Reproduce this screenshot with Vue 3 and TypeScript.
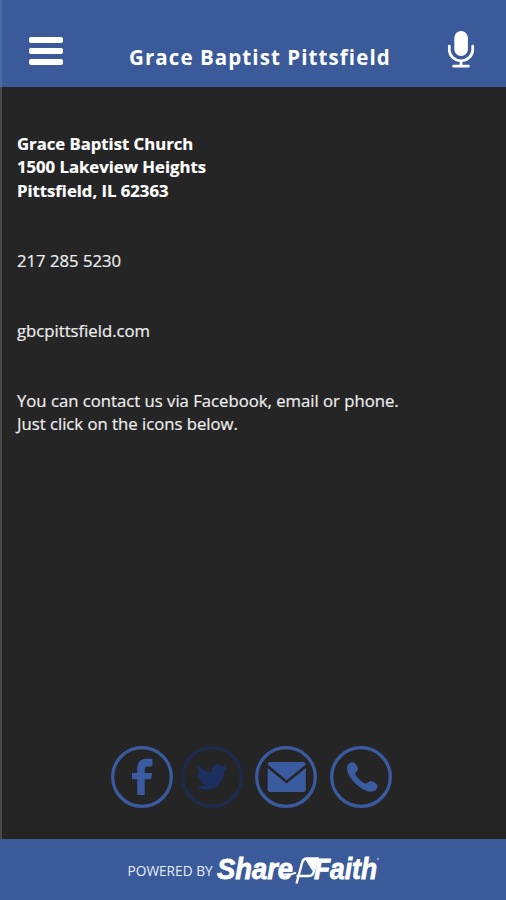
<script setup lang="ts">
const address: string[] = ['Grace Baptist Church', '1500 Lakeview Heights', 'Pittsfield, IL 62363']
</script>

<template>
  <div class="screen">
    <header class="bar">
      <button class="menu" aria-label="Menu"><i></i><i></i><i></i></button>
      <h1>Grace Baptist Pittsfield</h1>
      <svg class="mic" viewBox="0 0 28 40">
        <rect x="7.3" y="1" width="13.6" height="25" rx="6.8" fill="#fff" />
        <path d="M2.3 16v3.8a11.7 11 0 0 0 23.4 0v-3.8M14 31v5M6.6 36.2h14.8" fill="none" stroke="#fff" stroke-width="2.7" stroke-linecap="round" />
      </svg>
    </header>
    <main>
      <p class="address"><span v-for="line in address" :key="line">{{ line }}</span></p>
      <p class="phone">217 285 5230</p>
      <p class="site">gbcpittsfield.com</p>
      <p class="note">You can contact us via Facebook, email or phone.<br />Just click on the icons below.</p>
      <nav>
        <svg class="fb" viewBox="0 0 62 62">
          <circle cx="31" cy="31" r="29.3" />
          <path d="M41.4 13v7.600h-4.100c-3 0-3.600 1.400-3.600 3.400v3h7.500l-1.200 6.200h-6.300V49h-7.400V33.200H21V27h5.300v-4.800c0-6.100 3.900-9.500 9.500-9.500 2.500 0 4.500.1 5.600.3z" />
        </svg>
        <svg class="tw" viewBox="0 0 62 62">
          <circle cx="31" cy="31" r="29.3" />
          <path transform="translate(13 13.300) scale(.0198)" d="M1684 408q-67 98-162 167 1 14 1 42 0 130-38 259.500t-115.500 248.500-184.500 210.500-258 146-323 54.500q-271 0-496-145 35 4 78 4 225 0 401-138-105-2-188-64.500t-114-159.500q33 5 61 5 43 0 85-11-112-23-185.500-111.500t-73.500-205.500v-4q68 38 146 41-66-44-105-115t-39-154q0-88 44-163 121 149 294.500 238.500t371.500 99.500q-8-38-8-74 0-134 94.500-228.500t228.500-94.500q140 0 236 102 109-21 205-78-37 115-142 178 93-10 186-50z" />
        </svg>
        <svg class="mail" viewBox="0 0 62 62">
          <circle cx="31" cy="31" r="29.3" />
          <path d="M15 16h33q2.600 0 2.800 2.500L31.600 34.300 12.700 18.500Q12.900 16 15 16zM12.600 22l19 15.600L50.800 22v21.200q0 2.800-2.800 2.800H15.400q-2.800 0-2.800-2.800z" />
        </svg>
        <svg class="call" viewBox="0 0 62 62">
          <circle cx="31" cy="31" r="29.3" />
          <path d="M18.600 17.700c1.300-1.400 3.900-2 5.300-1.200 1.500.8 4 4.300 4.200 6.100.2 1.700-3 3.400-2.800 5.100.4 2.900 7.200 9.200 10.300 9.800 1.800.3 3.400-2.500 5.200-2.400 1.500.1 5.900 2.200 6.500 3.800.600 1.500-.4 3.900-1.700 5.200-1.700 1.500-5.200 1.900-8 1.200-7.800-2.300-17.200-11.300-20-19-.9-3-.7-6.900 1-8.600z" />
        </svg>
      </nav>
    </main>
    <footer>
      <span>POWERED BY</span>
      <svg class="logo" viewBox="0 0 170 34">
        <text x="3" y="25.300" textLength="76" lengthAdjust="spacingAndGlyphs">Share</text>
        <path d="M65 19.600q10 2.400 17-1" class="line thin" />
        <path d="M82.500 29.500 84.500 22 88 9Q89 4.500 93 4.500H103.500L99.500 18.500Q98.500 22 95 22H82.500" class="line" />
        <path d="M91 5h12l-4.500 12z" />
        <text x="100" y="25.300" textLength="63" lengthAdjust="spacingAndGlyphs">Faith</text>
        <circle cx="164" cy="5" r="1" fill="#a9bde2" stroke="none" />
      </svg>
    </footer>
  </div>
</template>

<style>
body { margin: 0; }
</style>

<style scoped>
* { box-sizing: border-box; }
.screen { width: 506px; height: 900px; display: flex; flex-direction: column; background: #252525; font-family: "Open Sans", sans-serif; overflow: hidden; }
.bar { height: 87px; flex: none; display: flex; align-items: flex-start; background: #3a5a99; border-left: 2px solid #4d6ba3; }
.menu { margin: 37px 0 0 26.500px; padding: 0; border: 0; background: none; width: 34px; display: flex; flex-direction: column; gap: 5px; }
.menu i { height: 6px; border-radius: 2px; background: #fff; }
h1 { margin: 42px 0 0 66.500px; width: 270px; font-size: 20.500px; line-height: 30px; font-weight: 700; letter-spacing: 1.080px; color: #fff; white-space: nowrap; }
.mic { width: 28px; height: 40px; margin: 30px 0 0 48px; flex: none; }
main { flex: 1; display: flex; flex-direction: column; padding: 45.200px 0 31px 15px; border-left: 2px solid #484848; color: #eee; font-size: 16.700px; line-height: 23.200px; -webkit-text-stroke: .2px; }
p { margin: 0 0 46.800px; white-space: nowrap; }
.address { font-weight: 700; color: #fff; }
.address span { display: block; }
nav { margin-top: auto; padding-left: 94px; display: flex; }
nav svg { width: 62px; height: 62px; fill: #3a5ba0; }
nav circle { fill: none; stroke: #3a5ba0; stroke-width: 3.300; }
nav .tw { margin-left: 8px; fill: #1b305f; }
.tw circle { stroke: #1d2a4c; }
.mail { margin-left: 12px; }
.call { margin-left: 13px; }
footer { height: 61px; flex: none; display: flex; background: #3a5a99; color: #e6edf9; padding-left: 127.500px; }
footer span { width: 86.500px; margin-top: 22px; font-size: 13.700px; line-height: 20px; white-space: nowrap; }
.logo { width: 170px; height: 34px; margin-top: 15px; fill: #fff; }
.logo text { font: italic 700 29px "Liberation Sans", sans-serif; stroke: #fff; stroke-width: .8; }
.line { fill: none; stroke: #fff; stroke-width: 2.400; }
.thin { stroke-width: 2; }
</style>
